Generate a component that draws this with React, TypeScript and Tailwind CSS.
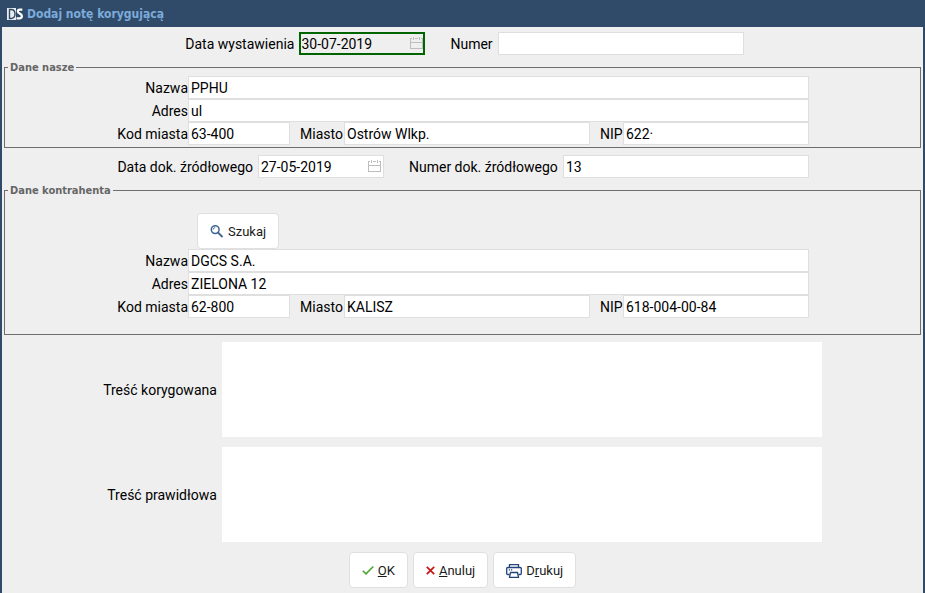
import { useState } from "react";
import clsx from "clsx";

type Party = {
  name: string;
  address: string;
  postcode: string;
  city: string;
  nip: string;
};

const INPUT =
  "h-[23px] border border-[#dfdfdf] bg-white px-0.5 text-sm text-black outline-none";

const BUTTON =
  "flex h-9 items-center gap-1 rounded-sm border border-[#e0e0e0] bg-white px-3 pt-0.5 text-[13px] text-[#1a1a1a]";

export default function App() {
  const [issueDate, setIssueDate] = useState("30-07-2019");
  const [number, setNumber] = useState("");
  const [sourceDate, setSourceDate] = useState("27-05-2019");
  const [sourceNumber, setSourceNumber] = useState("13");
  const [ours, setOurs] = useState<Party>({
    name: "PPHU",
    address: "ul",
    postcode: "63-400",
    city: "Ostrów Wlkp.",
    nip: "622·",
  });
  const [contractor, setContractor] = useState<Party>({
    name: "DGCS S.A.",
    address: "ZIELONA 12",
    postcode: "62-800",
    city: "KALISZ",
    nip: "618-004-00-84",
  });

  return (
    <div className="flex min-h-screen flex-col bg-[#304b69] px-0.5 font-['Roboto',sans-serif] text-sm text-black">
      <header className="flex h-[27px] items-center gap-1 pl-[5px]">
        <Logo />
        <h1 className="font-['DejaVu_Sans_Condensed','DejaVu_Sans',sans-serif] text-xs font-bold text-[#7cabdc]">
          Dodaj notę korygującą
        </h1>
      </header>

      <form
        className="flex-1 bg-[#efefef] pt-[5px]"
        onSubmit={(e) => e.preventDefault()}
      >
        <div className="flex items-center justify-center gap-[25px]">
          <div className="flex items-center gap-[5px]">
            <label htmlFor="issue-date" className="w-[113px] text-right">
              Data wystawienia
            </label>
            <DateField
              id="issue-date"
              value={issueDate}
              onChange={setIssueDate}
              active
            />
          </div>
          <div className="flex items-center gap-[5px]">
            <label htmlFor="number">Numer</label>
            <input
              id="number"
              className={clsx(INPUT, "w-[246px]")}
              value={number}
              onChange={(e) => setNumber(e.target.value)}
            />
          </div>
        </div>

        <Group title="Dane nasze" className="mt-1.5 pt-0.5 pb-0.5">
          <PartyFields prefix="ours" party={ours} onChange={setOurs} />
        </Group>

        <div className="mt-[7px] flex items-center justify-center gap-[25px]">
          <div className="flex items-center gap-[5px]">
            <label htmlFor="source-date" className="w-[137px] text-right">
              Data dok. źródłowego
            </label>
            <DateField
              id="source-date"
              value={sourceDate}
              onChange={setSourceDate}
            />
          </div>
          <div className="flex items-center gap-[5px]">
            <label htmlFor="source-number" className="w-[149px]">
              Numer dok. źródłowego
            </label>
            <input
              id="source-number"
              className={clsx(INPUT, "w-[246px]")}
              value={sourceNumber}
              onChange={(e) => setSourceNumber(e.target.value)}
            />
          </div>
        </div>

        <Group title="Dane kontrahenta" className="mt-1.5 pt-4 pb-4">
          <PartyFields
            prefix="contractor"
            party={contractor}
            onChange={setContractor}
            searchable
          />
        </Group>

        <div className="mt-[7px] grid grid-cols-[auto_600px] items-center justify-center gap-x-[5px] gap-y-2.5">
          <label htmlFor="wrong-text" className="text-right">
            Treść korygowana
          </label>
          <textarea
            id="wrong-text"
            className="h-[95px] resize-none bg-white p-0.5 outline-none"
          />
          <label htmlFor="right-text" className="text-right">
            Treść prawidłowa
          </label>
          <textarea
            id="right-text"
            className="h-[95px] resize-none bg-white p-0.5 outline-none"
          />
        </div>

        <div className="mt-2.5 flex justify-center gap-[5px] pb-[5px]">
          <button type="submit" className={BUTTON}>
            <CheckIcon />
            <span>
              <u>O</u>K
            </span>
          </button>
          <button type="button" className={BUTTON}>
            <CrossIcon />
            <span>
              <u>A</u>nuluj
            </span>
          </button>
          <button type="button" className={BUTTON}>
            <PrinterIcon />
            <span>
              D<u>r</u>ukuj
            </span>
          </button>
        </div>
      </form>
    </div>
  );
}

function Group({
  title,
  className,
  children,
}: {
  title: string;
  className: string;
  children: React.ReactNode;
}) {
  return (
    <fieldset
      className={clsx(
        "mx-0.5 flex justify-center border border-[#6e6e6e] px-[3px]",
        className
      )}
    >
      <legend className="h-[13px] px-0.5 font-['DejaVu_Sans_Condensed','DejaVu_Sans',sans-serif] text-[11px] leading-[13px] font-bold text-[#666666]">
        {title}
      </legend>
      {children}
    </fieldset>
  );
}

function PartyFields({
  prefix,
  party,
  onChange,
  searchable = false,
}: {
  prefix: string;
  party: Party;
  onChange: (p: Party) => void;
  searchable?: boolean;
}) {
  const bind = (key: keyof Party) => ({
    id: `${prefix}-${key}`,
    value: party[key],
    onChange: (e: React.ChangeEvent<HTMLInputElement>) =>
      onChange({ ...party, [key]: e.target.value }),
  });

  return (
    <div className="grid grid-cols-[72px_621px] items-center">
      {searchable && (
        <div className="col-start-2 flex pl-[9px]">
          <button type="button" className={BUTTON}>
            <SearchIcon />
            Szukaj
          </button>
        </div>
      )}
      <label htmlFor={`${prefix}-name`} className="text-right">
        Nazwa
      </label>
      <input className={INPUT} {...bind("name")} />
      <label htmlFor={`${prefix}-address`} className="text-right">
        Adres
      </label>
      <input className={INPUT} {...bind("address")} />
      <label htmlFor={`${prefix}-postcode`} className="text-right">
        Kod miasta
      </label>
      <div className="flex items-center gap-2.5">
        <input className={clsx(INPUT, "w-[102px]")} {...bind("postcode")} />
        <div className="flex items-center">
          <label htmlFor={`${prefix}-city`} className="w-11">
            Miasto
          </label>
          <input className={clsx(INPUT, "w-[246px]")} {...bind("city")} />
        </div>
        <div className="flex min-w-0 flex-1 items-center">
          <label htmlFor={`${prefix}-nip`} className="w-[23px]">
            NIP
          </label>
          <input className={clsx(INPUT, "min-w-0 flex-1")} {...bind("nip")} />
        </div>
      </div>
    </div>
  );
}

function DateField({
  id,
  value,
  onChange,
  active = false,
}: {
  id: string;
  value: string;
  onChange: (v: string) => void;
  active?: boolean;
}) {
  return (
    <div
      className={clsx(
        "flex h-[23px] w-[126px] items-center",
        active
          ? "border-2 border-[#006400] bg-[#efefef]"
          : "border border-[#dfdfdf] bg-white px-0.5"
      )}
    >
      <input
        id={id}
        className="min-w-0 flex-1 bg-transparent text-sm outline-none"
        value={value}
        onChange={(e) => onChange(e.target.value)}
      />
      <button type="button" aria-label="Kalendarz">
        <CalendarIcon />
      </button>
    </div>
  );
}

function Logo() {
  return (
    <svg width="16" height="12" viewBox="0 0 16 12" aria-hidden="true">
      <rect x="0" y="0" width="9" height="12" fill="#ffffff" opacity="0.9" />
      <path
        d="M2.500 1.500h1.500c2.500 0 4 1.800 4 4.500s-1.500 4.500-4 4.500H2.500z"
        fill="none"
        stroke="#304b69"
        strokeWidth="1.400"
      />
      <path
        d="M15.300 1.700h-2.500c-1.300 0-2 .6-2 1.700 0 1.200.8 1.700 2 2.200 1.300.5 2.100 1 2.100 2.500 0 1.500-1 2.300-2.500 2.300H9.500"
        fill="none"
        stroke="#ffffff"
        strokeWidth="2.200"
      />
    </svg>
  );
}

function CalendarIcon() {
  return (
    <svg
      width="14"
      height="14"
      viewBox="0 0 14 14"
      fill="none"
      stroke="#bdbdbd"
      shapeRendering="crispEdges"
      aria-hidden="true"
    >
      <path d="M1.500 1v10.500h12V1M1.500 5.500h12M1 1.500h2M6 1.500h3M12 1.500h2M4.500 0v3M10.500 0v3" />
    </svg>
  );
}

function SearchIcon() {
  return (
    <svg
      width="14"
      height="14"
      viewBox="0 0 14 14"
      fill="none"
      stroke="#3d6592"
      aria-hidden="true"
    >
      <circle cx="5.200" cy="4.600" r="3.900" strokeWidth="1.500" />
      <path d="M3.200 4.600a2 2 0 0 1 2-2" strokeWidth=".9" />
      <path d="M8 7.500l4.500 4.500" strokeWidth="1.800" />
    </svg>
  );
}

function CheckIcon() {
  return (
    <svg
      width="12"
      height="12"
      viewBox="0 0 12 12"
      fill="none"
      stroke="#4ba52e"
      strokeWidth="1.600"
      aria-hidden="true"
    >
      <path d="M.8 5.700l3.200 3.200L11.300 1.500" />
    </svg>
  );
}

function CrossIcon() {
  return (
    <svg
      width="9"
      height="10"
      viewBox="0 0 9 10"
      fill="none"
      stroke="#cc1414"
      strokeWidth="1.700"
      aria-hidden="true"
    >
      <path d="M.8 .8l7.400 7.400M8.200 .8L.8 8.200" />
    </svg>
  );
}

function PrinterIcon() {
  return (
    <svg
      width="16"
      height="14"
      viewBox="0 0 16 14"
      fill="none"
      stroke="#24437c"
      strokeWidth="1.300"
      aria-hidden="true"
    >
      <path d="M3.500 3.500V.7h9v2.800" />
      <path d="M3.500 10.500H1.700a1 1 0 0 1-1-1v-5a1 1 0 0 1 1-1h12.600a1 1 0 0 1 1 1v5a1 1 0 0 1-1 1h-1.800" />
      <path d="M4.500 8.500h7l1 4.800h-9zM2.800 5.800h1.200M5 5.800h1.200" />
    </svg>
  );
}
